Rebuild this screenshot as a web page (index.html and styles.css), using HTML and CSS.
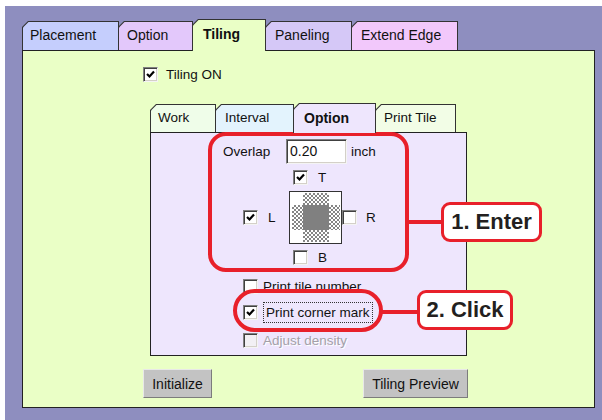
FILE: index.html
```html
<!DOCTYPE html>
<html lang="en">
  <head>
    <meta charset="UTF-8" />
    <title>Tiling Options</title>
    <link rel="stylesheet" href="styles.css">
  </head>
  <body>
    <div class="shot">
      <div class="frame">
        <!-- Main tabs -->
        <div class="tabs">
          <div class="tab tab-placement"><span>Placement</span></div>
          <div class="tab tab-option"><span>Option</span></div>
          <div class="tab tab-tiling active"><span>Tiling</span></div>
          <div class="tab tab-paneling"><span>Paneling</span></div>
          <div class="tab tab-extend"><span>Extend Edge</span></div>
        </div>

        <div class="panel">
          <label class="check-row tiling-on">
            <span class="cb on"><svg viewBox="0 0 13 13"><path d="M3 6 L5.5 8.5 L10 3.5" /></svg></span>
            <span>Tiling ON</span>
          </label>

          <!-- Inner tabs -->
          <div class="sub">
            <div class="tabs sub-tabs">
              <div class="tab tab-work"><span>Work</span></div>
              <div class="tab tab-interval"><span>Interval</span></div>
              <div class="tab tab-suboption active"><span>Option</span></div>
              <div class="tab tab-print"><span>Print Tile</span></div>
            </div>

            <div class="sub-panel">
              <div class="overlap-row">
                <span class="overlap-label">Overlap</span>
                <span class="field">0.20</span>
                <span>inch</span>
              </div>

              <div class="edge-row edge-top">
                <span class="cb on"><svg viewBox="0 0 13 13"><path d="M3 6 L5.5 8.5 L10 3.5" /></svg></span>
                <span>T</span>
              </div>

              <div class="edge-mid">
                <div class="edge-left">
                  <span class="cb on"><svg viewBox="0 0 13 13"><path d="M3 6 L5.5 8.5 L10 3.5" /></svg></span>
                  <span>L</span>
                </div>
                <div class="tile">
                  <i></i><i class="chk"></i><i></i>
                  <i class="chk"></i><i class="core"></i><i class="chk"></i>
                  <i></i><i class="chk"></i><i></i>
                </div>
                <span class="cb"></span>
                <span class="edge-r">R</span>
              </div>

              <div class="edge-row edge-bottom">
                <span class="cb"></span>
                <span>B</span>
              </div>

              <div class="opt-list">
                <div class="opt">
                  <span class="cb"></span>
                  <span>Print tile number</span>
                </div>
                <div class="opt">
                  <span class="cb on"><svg viewBox="0 0 13 13"><path d="M3 6 L5.5 8.5 L10 3.5" /></svg></span>
                  <span class="focus">Print corner mark</span>
                </div>
                <div class="opt disabled">
                  <span class="cb"></span>
                  <span>Adjust density</span>
                </div>
              </div>
            </div>
          </div>

          <div class="buttons">
            <button class="btn btn-init">Initialize</button>
            <button class="btn btn-preview">Tiling Preview</button>
          </div>
        </div>
      </div>

      <!-- Red annotations laid over the dialog -->
      <div class="ring ring-enter"></div>
      <div class="wire wire-enter"></div>
      <div class="callout callout-enter">1. Enter</div>

      <div class="ring ring-click"></div>
      <div class="wire wire-click"></div>
      <div class="callout callout-click">2. Click</div>
    </div>
  </body>
</html>
```

FILE: styles.css
```css
/* Page */
body {
  margin: 0;
  background: white;
  font-family: 'Liberation Sans', Arial, sans-serif;
  color: #111;
}

.shot {
  position: relative;
  width: 602px;
  height: 420px;
  overflow: hidden;
}

.frame {
  margin: 6px 0 0 5px;
  height: 414px;
  padding: 13px 7px 0 17px;
  box-sizing: border-box;
  background: #8e8ebf;
}

/* Folder tabs: dark shape with a coloured shape 1px inside */
.tabs {
  display: flex;
  align-items: flex-end;
  height: 31px;
}

.tab {
  height: 29px;
  margin-right: -1px;
  padding: 1px 1px 0 1px;
  box-sizing: border-box;
  background: #333;
  clip-path: polygon(6px 0, 100% 0, 100% 100%, 0 100%, 0 6px);
}

.tab span {
  display: block;
  height: 100%;
  padding-left: 7px;
  box-sizing: border-box;
  line-height: 27px;
  font-size: 14px;
  clip-path: polygon(5.5px 0, 100% 0, 100% 100%, 0 100%, 0 5.5px);
}

.tab.active {
  position: relative;
  z-index: 1;
  height: 32px;
  margin-bottom: -1px;
}

.tab.active span {
  font-weight: bold;
  line-height: 29px;
}

.tab-placement { width: 97px; }
.tab-placement span { background: #c5cefd; }
.tab-option { width: 75px; }
.tab-option span { background: #e3c8fb; padding-left: 8px; }
.tab-tiling { width: 74px; }
.tab-tiling span { background: #eaffc6; padding-left: 10px; }
.tab-paneling { width: 87px; }
.tab-paneling span { background: #d5c8f7; padding-left: 9px; }
.tab-extend { width: 107px; }
.tab-extend span { background: #f2c8fb; padding-left: 9px; }

/* Main panel */
.panel {
  height: 358px;
  border: 1px solid #222;
  box-sizing: border-box;
  background: #eaffc6;
  padding-top: 16px;
}

.check-row {
  display: flex;
  align-items: center;
  gap: 8px;
  padding-left: 120px;
  font-size: 13.5px;
}

/* Windows style check box */
.cb {
  display: inline-flex;
  flex: none;
  width: 15px;
  height: 15px;
  box-sizing: border-box;
  border-top: 1px solid #808080;
  border-left: 1px solid #808080;
  border-right: 1px solid #f4f4f4;
  border-bottom: 1px solid #f4f4f4;
  box-shadow: inset 1px 1px 0 #404040, inset -1px -1px 0 #d4d0c8;
  background: white;
}

.cb svg {
  width: 13px;
  height: 13px;
}

.cb path {
  fill: none;
  stroke: black;
  stroke-width: 2.2;
}

/* Inner tab block */
.sub {
  width: 317px;
  margin: 21px 0 0 127px;
}

.sub-tabs {
  height: 29px;
}

.sub-tabs .tab {
  height: 28px;
}

.sub-tabs .tab span {
  font-size: 13.5px;
  line-height: 26px;
}

.sub-tabs .tab.active {
  height: 30px;
}

.sub-tabs .tab.active span {
  font-size: 14px;
  line-height: 28px;
}

.tab-work { width: 66px; }
.tab-work span { background: #effde9; }
.tab-interval { width: 79px; }
.tab-interval span { background: #e3f3fd; padding-left: 9px; }
.tab-suboption { width: 83px; }
.tab-suboption span { background: #eee6fd; padding-left: 10px; }
.tab-print { width: 81px; }
.tab-print span { background: #f2fde6; padding-left: 8px; }

.sub-panel {
  height: 224px;
  border: 1px solid #222;
  box-sizing: border-box;
  background: #eee6fd;
  padding-top: 6px;
  font-size: 13.5px;
  overflow: hidden;
}

.overlap-row {
  display: flex;
  align-items: center;
  gap: 4px;
  padding-left: 72px;
}

.overlap-label {
  width: 59px;
}

.overlap-row .field {
  width: 61px;
  height: 25px;
  box-sizing: border-box;
  padding: 3px 0 0 3px;
  background: white;
  border-top: 1px solid #808080;
  border-left: 1px solid #808080;
  border-right: 1px solid #f4f4f4;
  border-bottom: 1px solid #f4f4f4;
  box-shadow: inset 1px 1px 0 #404040, inset -1px -1px 0 #d4d0c8;
  font-size: 14px;
}

.edge-row {
  display: flex;
  align-items: center;
  gap: 10px;
  padding-left: 142px;
}

.edge-top {
  margin-top: 6px;
}

.edge-bottom {
  margin-top: 6px;
}

.edge-mid {
  display: flex;
  align-items: center;
  margin-top: 6px;
  padding-left: 92px;
}

.edge-left {
  display: flex;
  align-items: center;
  gap: 10px;
  width: 46px;
}

.edge-r {
  margin-left: 9px;
}

/* Tile preview: 3x3 grid, checkered edges round a grey core */
.tile {
  display: grid;
  grid-template-columns: 11px 26px 11px;
  grid-template-rows: 12px 25px 12px;
  width: 53px;
  height: 53px;
  padding: 1px 2px;
  box-sizing: border-box;
  border: 1px solid #333;
  background: white;
}

.tile .chk {
  background: repeating-conic-gradient(#858585 0 25%, #ffffff 0 50%) 0 0 / 4px 4px;
}

.tile .core {
  background: #808080;
}

.opt-list {
  display: flex;
  flex-direction: column;
  gap: 6px;
  margin-top: 11px;
  padding-left: 92px;
}

.opt {
  display: flex;
  align-items: center;
  gap: 5px;
  height: 20px;
}

.opt.disabled {
  margin-top: 2px;
}

.opt .focus {
  padding: 2px 2px;
  border: 1px dotted #333;
}

.opt.disabled {
  color: #a4a0a8;
  text-shadow: 1px 1px 0 #fff;
}

.opt.disabled .cb {
  background: #f2f0f4;
}

/* Bottom buttons */
.buttons {
  display: flex;
  gap: 151px;
  margin-top: 13px;
  padding-left: 120px;
}

.btn {
  height: 29px;
  padding: 0 6px;
  background: #c3c3c3;
  border-top: 1px solid #e8e8e8;
  border-left: 1px solid #e8e8e8;
  border-right: 1px solid #7c7c7c;
  border-bottom: 1px solid #7c7c7c;
  font-family: 'Liberation Sans', Arial, sans-serif;
  font-size: 14px;
  color: #111;
}

.btn-init { width: 69px; }
.btn-preview { width: 105px; }

/* Annotations */
.ring {
  position: absolute;
  border: 4px solid #e8202a;
  box-sizing: border-box;
}

.ring-enter {
  left: 208px;
  top: 132px;
  width: 201px;
  height: 140px;
  border-radius: 18px;
}

.ring-click {
  left: 233px;
  top: 289px;
  width: 150px;
  height: 43px;
  border-radius: 22px;
}

.wire {
  position: absolute;
  height: 4px;
  background: #e8202a;
}

.wire-enter {
  left: 408px;
  top: 220px;
  width: 34px;
}

.wire-click {
  left: 382px;
  top: 310px;
  width: 36px;
}

.callout {
  position: absolute;
  height: 40px;
  box-sizing: border-box;
  border: 3px solid #e8202a;
  border-radius: 9px;
  background: white;
  color: #231f20;
  font-size: 22px;
  font-weight: bold;
  line-height: 34px;
  text-align: center;
}

.callout-enter {
  left: 441px;
  top: 202px;
  width: 101px;
}

.callout-click {
  left: 417px;
  top: 290px;
  width: 96px;
}
```
